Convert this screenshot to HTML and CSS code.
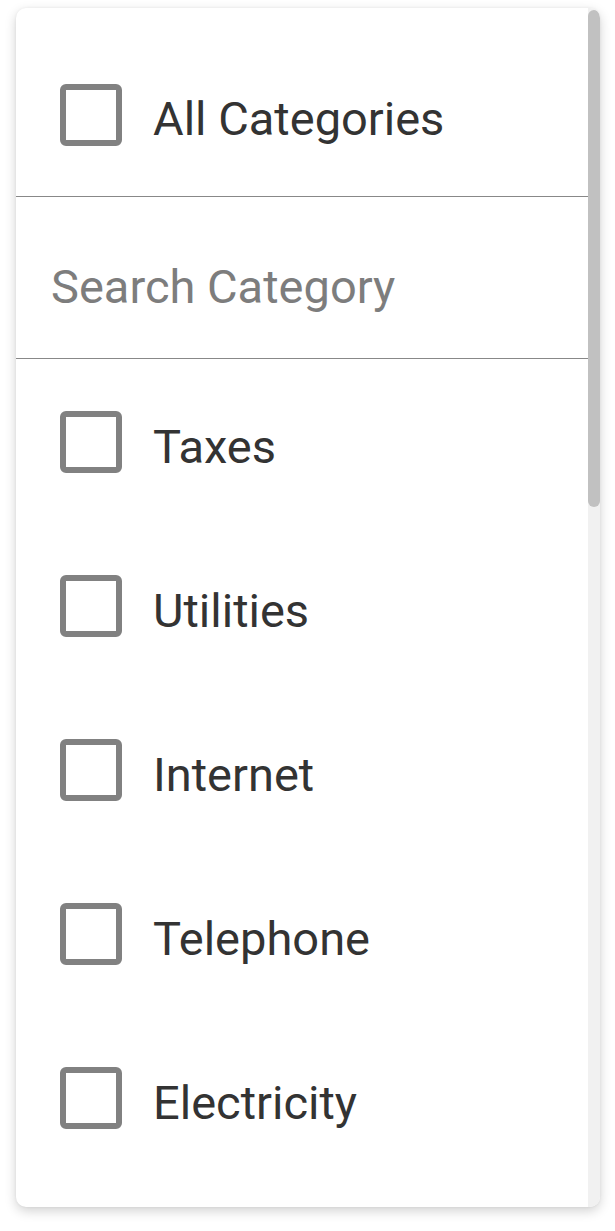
FILE: index.html
```html
<!DOCTYPE html>
<html lang="en">
<head>
<meta charset="utf-8">
<title>Category filter</title>
<link rel="stylesheet" href="styles.css">
</head>
<body>
<div class="card">
  <div class="content">
    <label class="row row-all">
      <span class="box"></span>
      <span class="label">All Categories</span>
    </label>
    <div class="search">
      <input class="search-input" type="text" placeholder="Search Category">
    </div>
    <ul class="list">
      <li class="row"><span class="box"></span><span class="label">Taxes</span></li>
      <li class="row"><span class="box"></span><span class="label">Utilities</span></li>
      <li class="row"><span class="box"></span><span class="label">Internet</span></li>
      <li class="row"><span class="box"></span><span class="label">Telephone</span></li>
      <li class="row"><span class="box"></span><span class="label">Electricity</span></li>
    </ul>
  </div>
  <div class="scrollbar"><div class="thumb"></div></div>
</div>
</body>
</html>
```

FILE: styles.css
```css
html, body {
  margin: 0;
  padding: 0;
  background: #ffffff;
}

body {
  padding: 8px 15px 24px 16px;
  font-family: Roboto, "Liberation Sans", sans-serif;
}

.card {
  position: relative;
  height: 1199px;
  box-sizing: border-box;
  background: #ffffff;
  border-radius: 10px;
  box-shadow: 0 4px 12px rgba(0, 0, 0, 0.18), 0 0 3px rgba(0, 0, 0, 0.06);
  overflow: hidden;
}

.content {
  padding-top: 25px;
}

.scrollbar {
  position: absolute;
  top: 0;
  right: 0;
  bottom: 0;
  width: 12px;
  background: #f1f1f1;
}

.thumb {
  margin-top: 2px;
  height: 497px;
  background: #c1c1c1;
  border-radius: 6px;
}

.row {
  display: flex;
  align-items: center;
  height: 164px;
  padding-left: 44px;
  box-sizing: border-box;
}

.row-all {
  border-bottom: 1px solid #888888;
}

.box {
  flex: none;
  width: 62px;
  height: 62px;
  box-sizing: border-box;
  border: 6px solid #818181;
  border-radius: 6px;
  background: #ffffff;
}

.label {
  margin-left: 31px;
  margin-top: 8px;
  font-size: 47px;
  color: #333333;
}

.search {
  height: 162px;
  box-sizing: border-box;
  border-bottom: 1px solid #888888;
  display: flex;
  align-items: center;
  padding: 17px 0 0 35px;
}

.search-input {
  border: none;
  outline: none;
  padding: 0;
  width: 100%;
  font-family: Roboto, "Liberation Sans", sans-serif;
  font-size: 47px;
  color: #333333;
  background: transparent;
}

.search-input::placeholder {
  color: #7d7d7d;
}

.list {
  list-style: none;
  margin: 0;
  padding: 1px 0 0 0;
}
```
